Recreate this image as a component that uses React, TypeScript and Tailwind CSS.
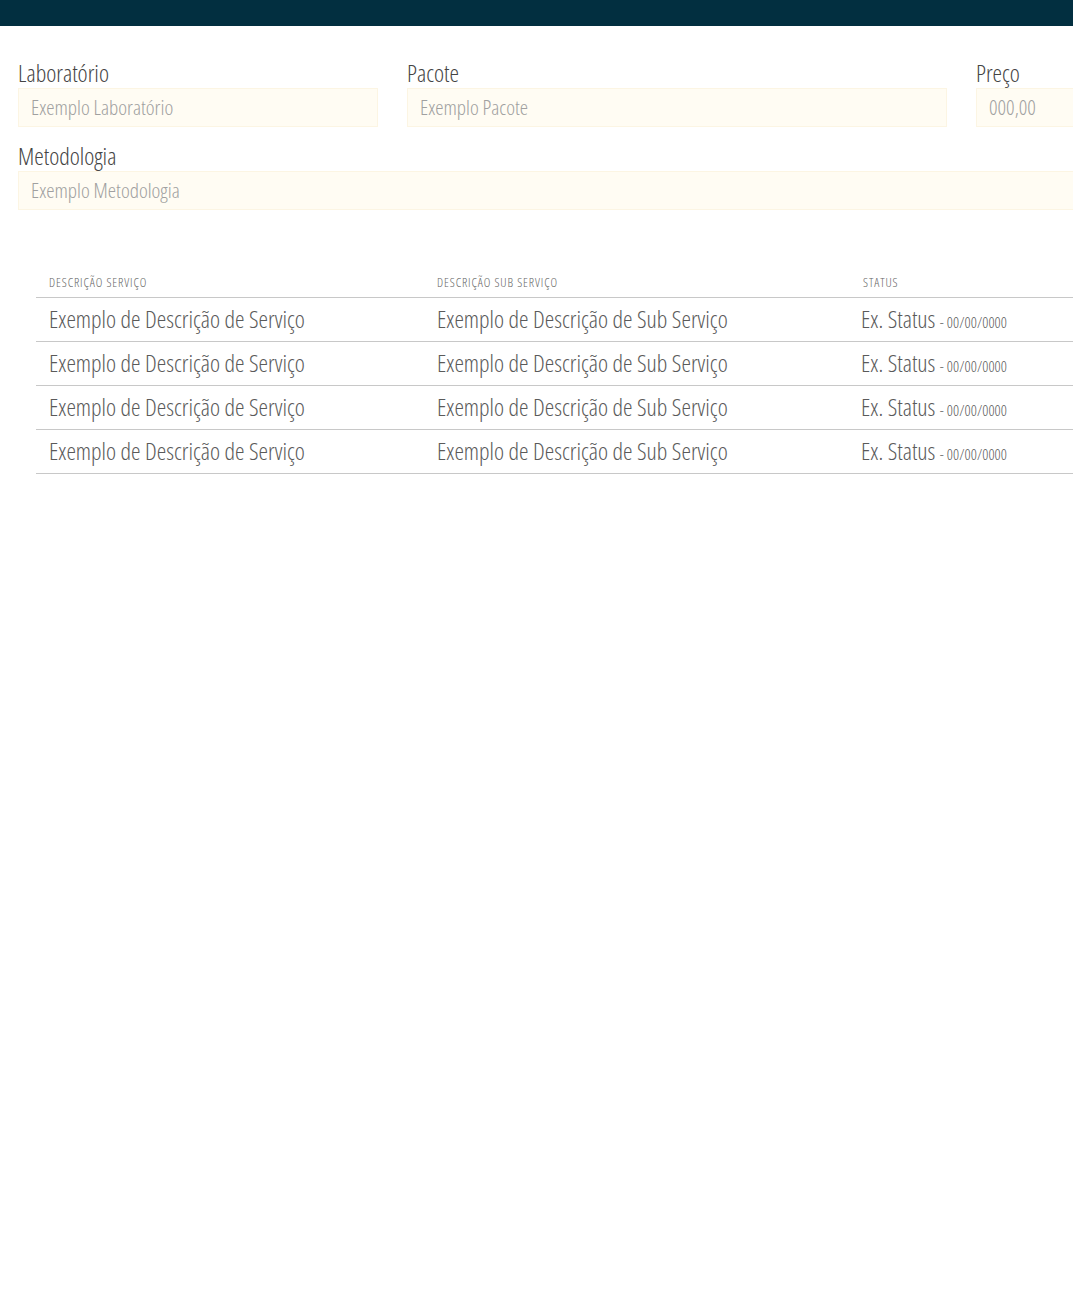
const font = "font-['Open_Sans',sans-serif] font-light [font-stretch:75%]";

const rows = [1, 2, 3, 4];

function Field({ label, placeholder, width }: { label: string; placeholder: string; width: string }) {
  return (
    <div className={`${width} shrink-0 flex flex-col`}>
      <label className="text-[24px] leading-[28px] text-[#444] pt-[1px]">{label}</label>
      <div className="mt-[1px] h-[39px] bg-[#fffcf3] border border-[#fcf5e3] pl-[12px] pr-[11px] flex items-center text-[21px] text-[#a0a0a0]">
        {placeholder}
      </div>
    </div>
  );
}

export default function App() {
  return (
    <div className={`w-[1073px] min-h-[1310px] bg-white overflow-hidden ${font}`}>
      <div className="h-[26px] bg-[#022f40]" />
      <div className="pl-[18px] pt-[32px] w-[1300px]">
        <div className="flex gap-[29px]">
          <Field label="Laboratório" placeholder="Exemplo Laboratório" width="w-[360px]" />
          <Field label="Pacote" placeholder="Exemplo Pacote" width="w-[540px]" />
          <Field label="Preço" placeholder="000,00" width="w-[180px]" />
        </div>
        <div className="mt-[14px]">
          <Field label="Metodologia" placeholder="Exemplo Metodologia" width="w-[1160px]" />
        </div>
      </div>
      <div className="pl-[36px] pt-[55px] w-[1300px]">
        <table className="w-[1160px] border-collapse text-left">
          <thead>
            <tr className="border-b border-[#c8c8c8] text-[12.5px] tracking-[0.9px] text-[#666] uppercase">
              <th className="w-[388px] pl-[13px] pt-[6px] h-[32px] font-light">Descrição Serviço</th>
              <th className="w-[426px] pl-[13px] pt-[6px] font-light">Descrição Sub Serviço</th>
              <th className="pl-[13px] pt-[6px] font-light">Status</th>
            </tr>
          </thead>
          <tbody>
            {rows.map((r) => (
              <tr key={r} className="border-b border-[#c8c8c8] h-[44px] text-[24px] text-[#5a5a5a]">
                <td className="pl-[13px]">Exemplo de Descrição de Serviço</td>
                <td className="pl-[13px]">Exemplo de Descrição de Sub Serviço</td>
                <td className="pl-[11px]">
                  Ex. Status <span className="text-[15px] tracking-[0.1px]">- 00/00/0000</span>
                </td>
              </tr>
            ))}
          </tbody>
        </table>
      </div>
    </div>
  );
}
